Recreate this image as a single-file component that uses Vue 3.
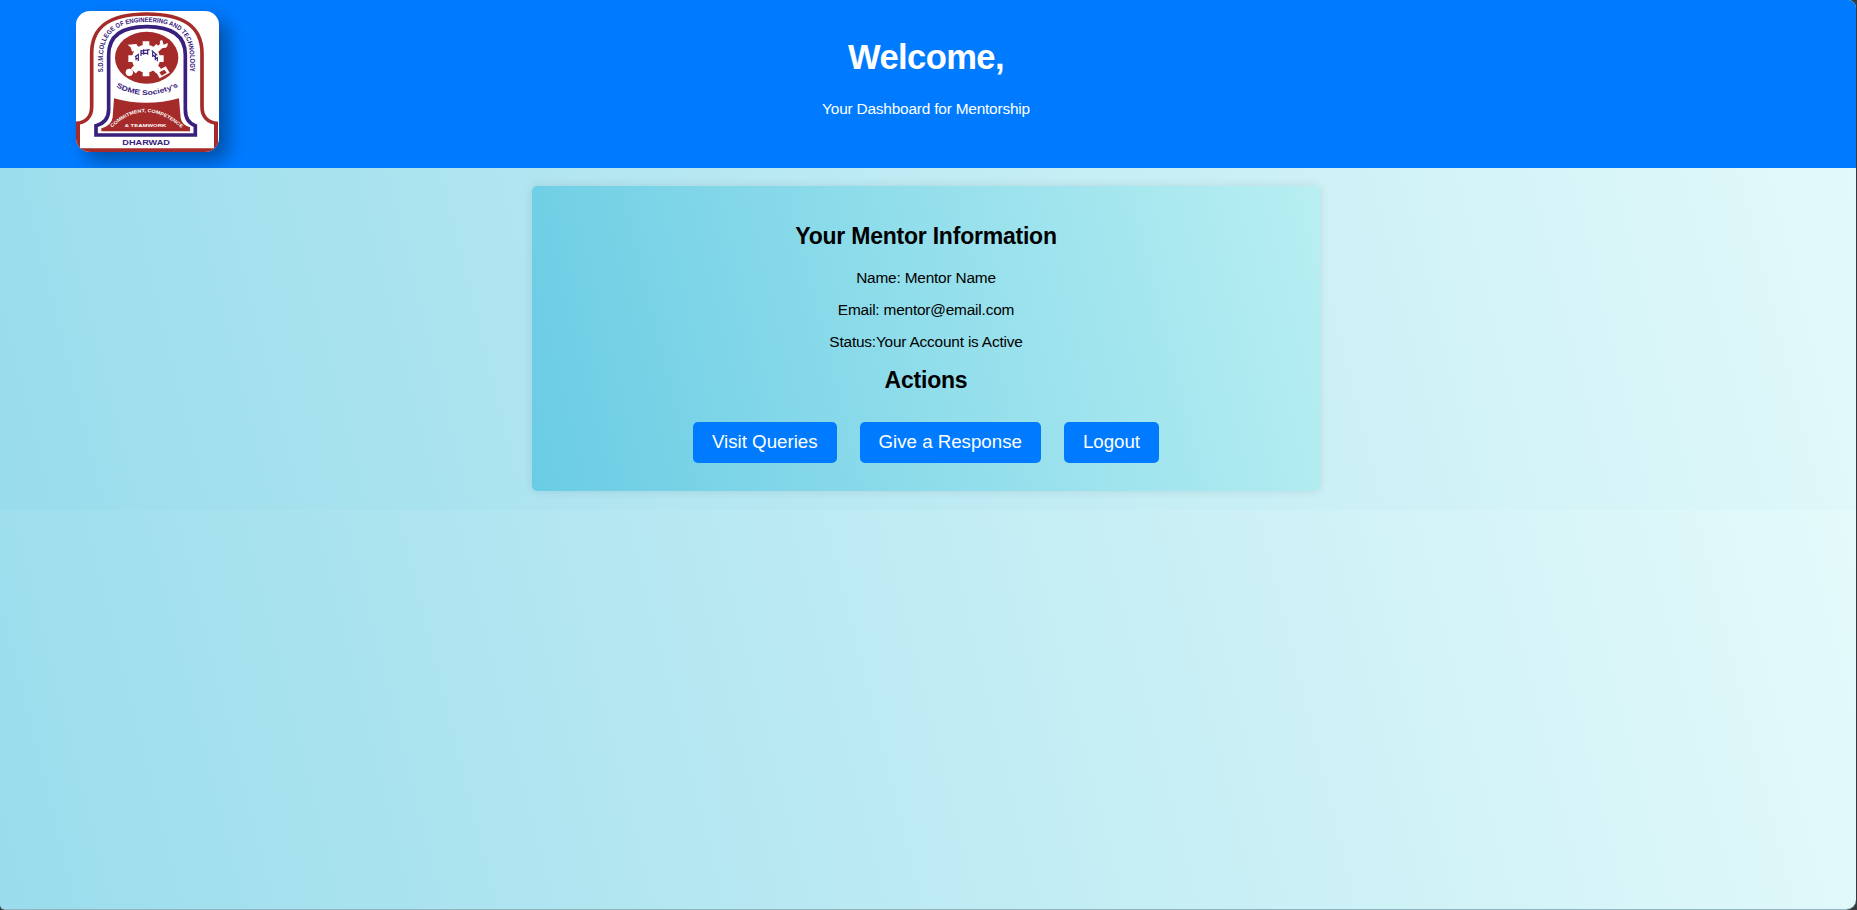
<script setup>
const details = ['Name: Mentor Name', 'Email: mentor@email.com', 'Status:Your Account is Active']
const actions = ['Visit Queries', 'Give a Response', 'Logout']
</script>

<template>
  <div class="window">
    <div class="page">
      <header class="header">
        <svg class="logo" viewBox="48 33 429 423" preserveAspectRatio="none">
          <defs>
            <path id="arch-text" d="M130 217 V165 C130 95 180 66 260 66 C340 66 389 95 389 165 V240" />
            <path id="society-text" d="M168 260 Q258 312 362 256" />
            <path id="motto-text" d="M156 383 Q260 285 374 393" />
          </defs>
          <rect x="48" y="33" width="429" height="423" fill="#fff" />
          <path d="M48 370 C78 368 95 350 95 320 V160 C95 75 155 42 260 42 C365 42 426 75 426 160 V320 C426 350 443 368 473 370" fill="none" stroke="#a52a2a" stroke-width="11" />
          <path d="M48 366 H60 V445 H462 V366 H474 V456 H48 Z" fill="#a52a2a" />
          <path d="M108 405 V377 C132 371 146 354 146 328 V165 C146 108 185 80 260 80 C337 80 376 108 376 165 V328 C376 354 388 371 406 377 V405 Z" fill="none" stroke="#38207c" stroke-width="11" />
          <ellipse cx="260" cy="173" rx="95" ry="78" fill="#a52a2a" />
          <g fill="#fff">
            <circle cx="258" cy="176" r="42" />
            <g stroke="#fff" stroke-width="20">
              <path d="M258 124 V229 M205 176 H311 M220 139 L296 213 M220 213 L296 139" />
            </g>
            <circle cx="208" cy="217" r="11" />
            <path d="M203 134 L230 132 L232 158 L225 151 L216 155 L213 143 Z" />
            <path d="M282 148 L300 132 Q297 119 307 121 L311 134 L323 129 Q325 146 308 144 L291 158 Z" />
            <path d="M288 215 L317 199 L329 218 L299 235 Z" />
          </g>
          <path d="M298 217 L313 209 L320 218 L305 227 Z" fill="#a52a2a" />
          <path d="M228 181 V169 M235 183 V162 M243 168 V151 M251 164 V148 M263 164 V149 M278 171 V152 M286 181 V161 M292 184 V171 M225 170 L237 162 M241 153 L269 149 M275 151 L292 166 M228 176 H236 M244 160 H264 M278 164 L290 176" fill="none" stroke="#38207c" stroke-width="3.5" />
          <path d="M162 295 Q258 322 357 295 L362 354 Q365 374 390 382 V394 H124 V385 Q155 377 158 352 Z" fill="#a52a2a" />
          <text class="mark navy college"><textPath href="#arch-text" textLength="474" lengthAdjust="spacingAndGlyphs">S.D.M.COLLEGE OF ENGINEERING AND TECHNOLOGY</textPath></text>
          <text class="mark navy society"><textPath href="#society-text" textLength="196" lengthAdjust="spacingAndGlyphs">SDME Society's</textPath></text>
          <text class="mark white motto"><textPath href="#motto-text" textLength="234" lengthAdjust="spacingAndGlyphs">COMMITMENT, COMPETENCE</textPath></text>
          <text class="mark white team" x="194" y="382" textLength="125" lengthAdjust="spacingAndGlyphs">&amp; TEAMWORK</text>
          <text class="mark navy city" x="187" y="436" textLength="143" lengthAdjust="spacingAndGlyphs">DHARWAD</text>
        </svg>
        <h1>Welcome,</h1>
        <p>Your Dashboard for Mentorship</p>
      </header>
      <main class="card">
        <h2>Your Mentor Information</h2>
        <p v-for="line in details" :key="line">{{ line }}</p>
        <h2 class="actions-title">Actions</h2>
        <div class="actions">
          <button v-for="label in actions" :key="label" type="button">{{ label }}</button>
        </div>
      </main>
    </div>
  </div>
</template>

<style>
body { margin: 0; background: #343a3d; }
</style>

<style scoped>
.window {
  box-sizing: border-box;
  width: 1856px;
  height: 910px;
  overflow: hidden;
  border-bottom: 1px solid #91b5bd;
  border-radius: 0 8px 10px 5px;
  background: linear-gradient(76deg, #99dcec, #e4fafb) 0 0 / 100% 510px;
  font-family: "Liberation Sans", Arial, sans-serif;
  color: #000;
}
.page { text-align: center; }
.header {
  position: relative;
  box-sizing: border-box;
  height: 168px;
  padding: 36px 4px 0 0;
  overflow: hidden;
  background: #007bff;
  color: #fff;
}
.logo {
  position: absolute;
  left: 76px;
  top: 11px;
  width: 143px;
  height: 141px;
  border-radius: 14px;
  box-shadow: 9px 9px 18px rgba(0, 0, 0, 0.35);
}
.mark { font-weight: bold; }
.navy { fill: #38207c; }
.white { fill: #fff; }
.college { font-size: 20px; }
.society { font-size: 21px; }
.motto { font-size: 14px; }
.team { font-size: 13px; }
.city { font-size: 23px; }
h1 { margin: 0; font-size: 34.6px; line-height: 42px; letter-spacing: -0.6px; }
p { margin: 0; font-size: 15.4px; line-height: 18px; letter-spacing: -0.19px; }
.header p { margin-top: 22px; }
.card {
  box-sizing: border-box;
  width: 788px;
  height: 305px;
  margin: 18px 0 0 532px;
  padding-top: 36px;
  border-radius: 5px;
  background: linear-gradient(76deg, #6acce4, #b8eff2);
  box-shadow: 0 0 10px rgba(0, 0, 0, 0.1);
}
h2 { margin: 0; font-size: 23px; line-height: 28px; letter-spacing: -0.22px; }
.card p { margin-top: 14px; }
.card h2 + p { margin-top: 19px; }
.card .actions-title { margin-top: 15px; }
.actions {
  display: flex;
  justify-content: center;
  gap: 23px;
  margin-top: 28px;
}
button {
  height: 41px;
  padding: 0 19px 1px;
  border: 0;
  border-radius: 5px;
  background: #007bff;
  color: #fff;
  font: 18.7px "Liberation Sans", Arial, sans-serif;
}
</style>
